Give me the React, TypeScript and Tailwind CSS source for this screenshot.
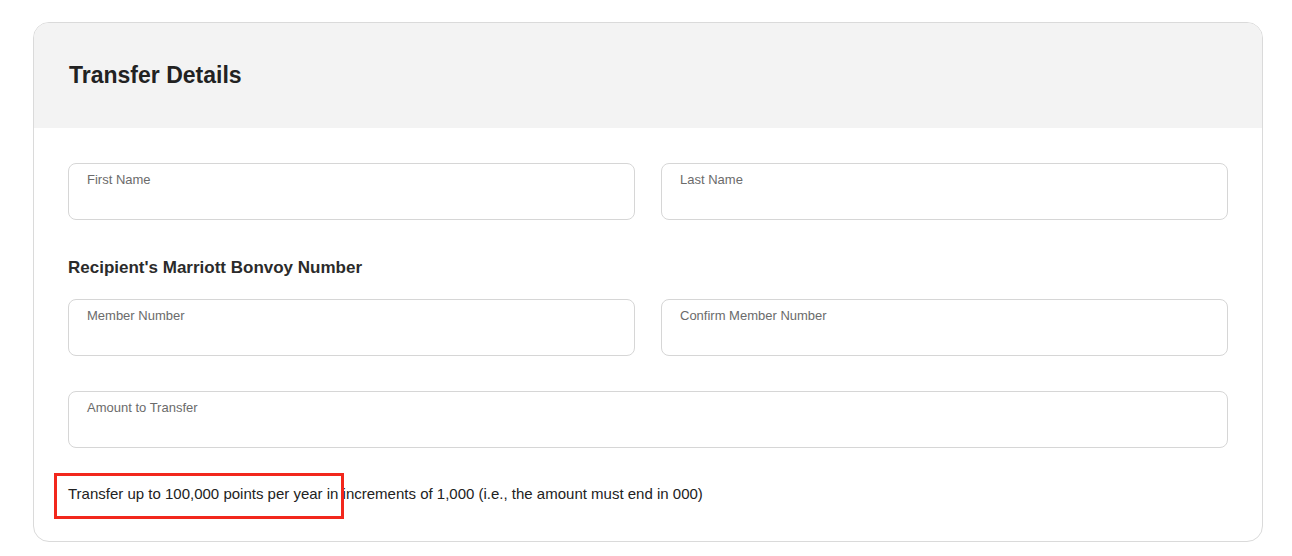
import React from 'react';

const Field = ({ label, className = '' }: { label: string; className?: string }) => (
    <label className={`block h-[57px] rounded-lg border border-[#d6d6d6] bg-white px-[18px] pt-[8px] ${className}`}>
        <span className="block text-[13px] leading-4 text-[#6b6b6b]">{label}</span>
        <input type="text" className="w-full bg-transparent text-[15px] text-[#222] outline-none" />
    </label>
);

export default function App() {
    return (
        <div className="min-h-screen bg-white pl-[33px] pr-[29px] pt-[22px] font-['Liberation_Sans',Arial,sans-serif]">
            <div className="overflow-hidden rounded-[16px] border border-[#dadada]">
                <div className="h-[105px] bg-[#f3f3f3] px-[35px] pt-[38px]">
                    <h2 className="text-[23px] font-bold leading-7 text-[#222]">Transfer Details</h2>
                </div>
                <div className="px-[34px] pt-[35px] pb-[37px]">
                    <div className="grid grid-cols-2 gap-[26px]">
                        <Field label="First Name" />
                        <Field label="Last Name" />
                    </div>

                    <h3 className="mt-[36px] mb-[19px] text-[17px] font-semibold leading-6 text-[#2b2b2b]">Recipient's Marriott Bonvoy Number</h3>
                    <div className="grid grid-cols-2 gap-[26px]">
                        <Field label="Member Number" />
                        <Field label="Confirm Member Number" />
                    </div>

                    <Field label="Amount to Transfer" className="mt-[35px]" />

                    <div className="relative mt-[36px]">
                        <p className="text-[15px] leading-5 text-[#222]">
                            Transfer up to 100,000 points per year in increments of 1,000 (i.e., the amount must end in 000)
                        </p>
                        {/* annotation highlight */}
                        <div className="pointer-events-none absolute left-[-14px] top-[-11px] h-[46px] w-[290px] border-[3px] border-[#f2271c]" />
                    </div>
                </div>
            </div>
        </div>
    );
}
